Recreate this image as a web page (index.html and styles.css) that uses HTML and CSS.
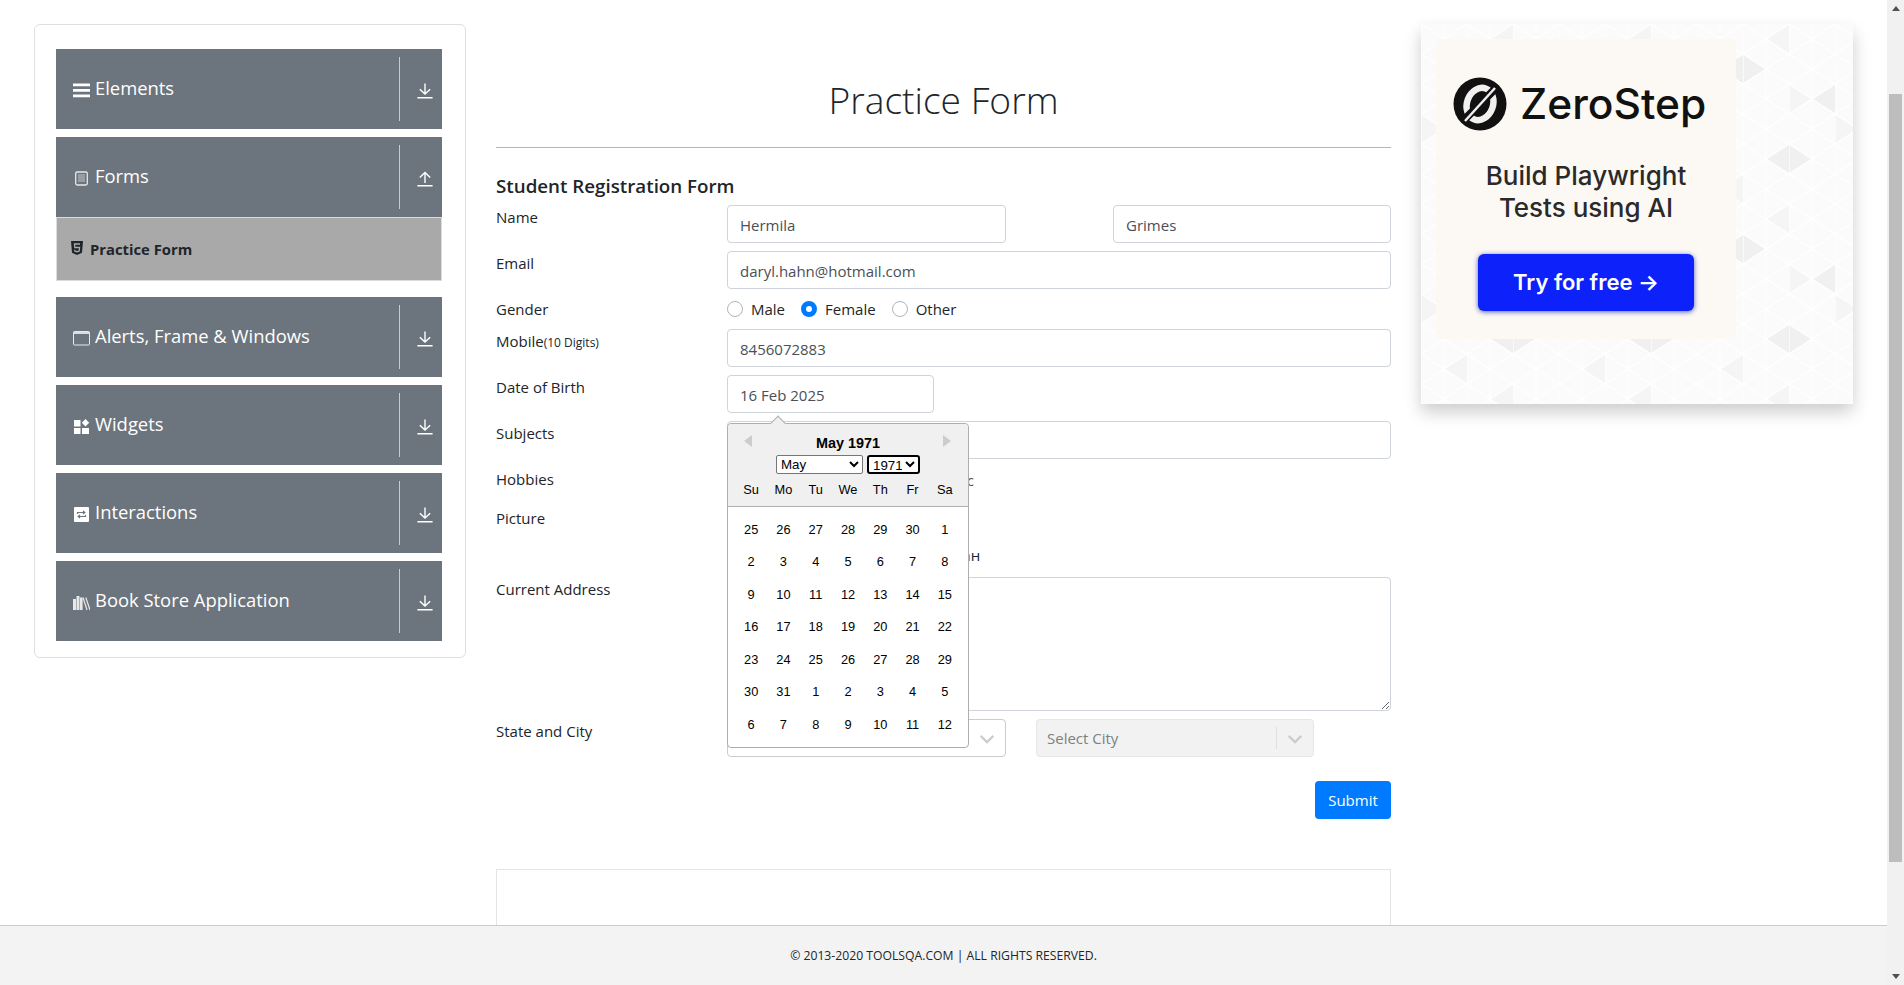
FILE: index.html
```html
<!DOCTYPE html>
<html lang="en">
<head>
    <meta charset="UTF-8">
    <meta name="viewport" content="width=device-width, initial-scale=1.0">
    <title>Practice Form</title>
    <link rel="stylesheet" href="styles.css">
</head>
<body>
<div class="page">
    <div class="content">
        <aside class="left-panel">
            <div class="menu-card">
                <div class="group">
                    <div class="group-header">
                        <svg class="group-icon" viewBox="0 0 17 17"><path fill="#fff" d="M0 1.500h17v2.800H0zM0 7h17v2.800H0zM0 12.500h17v2.800H0z"/></svg>
                        <span class="group-title">Elements</span>
                        <span class="group-arrow"><svg viewBox="0 0 16 16"><path fill="none" stroke="#fff" stroke-width="1.400" d="M8 .5V11M2.800 6.200 8 11l5.200-4.800M.4 14.800h15.200"/></svg></span>
                    </div>
                </div>
                <div class="group">
                    <div class="group-header">
                        <svg class="group-icon" viewBox="0 0 17 17"><rect x="2.700" y="2" width="11.600" height="13" rx="1.500" fill="none" stroke="#e8e8e8" stroke-width="1.300"/><path stroke="#c4c7ca" stroke-width="1" d="M5 5h7M5 7h7M5 9h7M5 11h7"/></svg>
                        <span class="group-title">Forms</span>
                        <span class="group-arrow"><svg viewBox="0 0 16 16"><path fill="none" stroke="#fff" stroke-width="1.400" d="M8 12V1.500M2.800 6.500 8 1.500l5.200 5M.4 14.800h15.200"/></svg></span>
                    </div>
                    <div class="sub-item">
                        <svg class="sub-icon" viewBox="0 0 12 14"><path fill="#212529" d="M0 0h12l-1 11.800L6 14l-5-2.200z"/><path fill="none" stroke="#a9a9a9" stroke-width="1.300" d="M9 3H3.500l.3 3.500h4.700l-.3 3.500-2.200.7-2.200-.7-.1-1.200"/></svg>
                        <span>Practice Form</span>
                    </div>
                </div>
                <div class="group">
                    <div class="group-header">
                        <svg class="group-icon" viewBox="0 0 17 17"><rect x=".5" y="1.500" width="16" height="13.500" rx=".8" fill="none" stroke="#e8e8e8"/><path stroke="#e8e8e8" stroke-width="1.800" d="M.5 3h16"/></svg>
                        <span class="group-title">Alerts, Frame &amp; Windows</span>
                        <span class="group-arrow"><svg viewBox="0 0 16 16"><path fill="none" stroke="#fff" stroke-width="1.400" d="M8 .5V11M2.800 6.200 8 11l5.200-4.800M.4 14.800h15.200"/></svg></span>
                    </div>
                </div>
                <div class="group">
                    <div class="group-header">
                        <svg class="group-icon" viewBox="0 0 17 17"><path fill="#fff" d="M1 2h6.500v6.500H1zM1 10h6.500v6H1zM9 10h7v6H9zM12.500 1l3.700 3.700-3.700 3.700-3.700-3.700z"/></svg>
                        <span class="group-title">Widgets</span>
                        <span class="group-arrow"><svg viewBox="0 0 16 16"><path fill="none" stroke="#fff" stroke-width="1.400" d="M8 .5V11M2.800 6.200 8 11l5.200-4.800M.4 14.800h15.200"/></svg></span>
                    </div>
                </div>
                <div class="group">
                    <div class="group-header">
                        <svg class="group-icon" viewBox="0 0 17 17"><rect x="1" y="1" width="15" height="15" rx="1" fill="#fff"/><path fill="none" stroke="#6c757d" stroke-width="1.200" d="M4.500 8V6.500h7M10 5l1.800 1.500L10 8M12.500 9v1.500h-7M7 9l-1.800 1.500L7 12"/></svg>
                        <span class="group-title">Interactions</span>
                        <span class="group-arrow"><svg viewBox="0 0 16 16"><path fill="none" stroke="#fff" stroke-width="1.400" d="M8 .5V11M2.800 6.200 8 11l5.200-4.800M.4 14.800h15.200"/></svg></span>
                    </div>
                </div>
                <div class="group">
                    <div class="group-header">
                        <svg class="group-icon" viewBox="0 0 17 17"><path fill="#e8e8e8" d="M0 5h3v11H0zM3.500 2h3v14h-3zM7 3.500h2.600V16H7z"/><path stroke="#e8e8e8" stroke-width="1.200" fill="none" d="M10 3.500 14 16M12.800 3.500 17 16"/></svg>
                        <span class="group-title">Book Store Application</span>
                        <span class="group-arrow"><svg viewBox="0 0 16 16"><path fill="none" stroke="#fff" stroke-width="1.400" d="M8 .5V11M2.800 6.200 8 11l5.200-4.800M.4 14.800h15.200"/></svg></span>
                    </div>
                </div>
            </div>
        </aside>

        <main class="form-col">
            <h1 class="page-title">Practice Form</h1>
            <hr class="title-rule">
            <h5 class="form-title">Student Registration Form</h5>
            <form class="reg-form">
                <div class="row">
                    <label class="row-label">Name</label>
                    <div class="row-body name-fields">
                        <input class="field" type="text" value="Hermila">
                        <input class="field" type="text" value="Grimes">
                    </div>
                </div>
                <div class="row">
                    <label class="row-label">Email</label>
                    <div class="row-body"><input class="field" type="text" value="daryl.hahn@hotmail.com"></div>
                </div>
                <div class="row row-short">
                    <label class="row-label">Gender</label>
                    <div class="row-body radios">
                        <span class="radio"><i class="dot"></i>Male</span>
                        <span class="radio"><i class="dot dot-on"></i>Female</span>
                        <span class="radio"><i class="dot"></i>Other</span>
                    </div>
                </div>
                <div class="row">
                    <label class="row-label">Mobile<small>(10 Digits)</small></label>
                    <div class="row-body"><input class="field" type="text" value="8456072883"></div>
                </div>
                <div class="row">
                    <label class="row-label">Date of Birth</label>
                    <div class="row-body dob-body">
                        <input class="field dob-field" type="text" value="16 Feb 2025">
                        <div class="datepicker">
                            <div class="dp-head">
                                <span class="dp-prev"></span>
                                <span class="dp-next"></span>
                                <div class="dp-month">May 1971</div>
                                <div class="dp-selects">
                                    <select class="dp-select dp-select-month"><option>May</option></select>
                                    <select class="dp-select dp-select-year"><option>1971</option></select>
                                </div>
                                <div class="dp-names">
                                    <span>Su</span><span>Mo</span><span>Tu</span><span>We</span><span>Th</span><span>Fr</span><span>Sa</span>
                                </div>
                            </div>
                            <div class="dp-days">
                                <span>25</span><span>26</span><span>27</span><span>28</span><span>29</span><span>30</span><span>1</span>
                                <span>2</span><span>3</span><span>4</span><span>5</span><span>6</span><span>7</span><span>8</span>
                                <span>9</span><span>10</span><span>11</span><span>12</span><span>13</span><span>14</span><span>15</span>
                                <span>16</span><span>17</span><span>18</span><span>19</span><span>20</span><span>21</span><span>22</span>
                                <span>23</span><span>24</span><span>25</span><span>26</span><span>27</span><span>28</span><span>29</span>
                                <span>30</span><span>31</span><span>1</span><span>2</span><span>3</span><span>4</span><span>5</span>
                                <span>6</span><span>7</span><span>8</span><span>9</span><span>10</span><span>11</span><span>12</span>
                            </div>
                        </div>
                    </div>
                </div>
                <div class="row">
                    <label class="row-label">Subjects</label>
                    <div class="row-body"><div class="field"></div></div>
                </div>
                <div class="row row-hobbies">
                    <label class="row-label">Hobbies</label>
                    <div class="row-body hobby-text">Music</div>
                </div>
                <div class="row row-picture">
                    <label class="row-label">Picture</label>
                    <div class="row-body file-text">Файл не выбран</div>
                </div>
                <div class="row row-address">
                    <label class="row-label">Current Address</label>
                    <div class="row-body"><textarea class="field address"></textarea></div>
                </div>
                <div class="row">
                    <label class="row-label">State and City</label>
                    <div class="row-body state-fields">
                        <div class="select-box">
                            <span class="select-text"></span>
                            <svg class="chev" viewBox="0 0 20 20"><path fill="#ccc" d="M4.500 7.100 10 12.600l5.500-5.500 1.600 1.600L10 15.800 2.900 8.700z"/></svg>
                        </div>
                        <div class="select-box select-off">
                            <span class="select-text">Select City</span>
                            <svg class="chev" viewBox="0 0 20 20"><path fill="#ccc" d="M4.500 7.100 10 12.600l5.500-5.500 1.600 1.600L10 15.800 2.900 8.700z"/></svg>
                        </div>
                    </div>
                </div>
                <div class="submit-row"><button class="submit" type="button">Submit</button></div>
            </form>
            <div class="empty-box"></div>
        </main>

        <aside class="ad-col">
            <div class="ad">
                <svg class="ad-pattern" width="100%" height="100%">
                    <defs>
                        <pattern id="shades" width="138" height="180" patternUnits="userSpaceOnUse">
                            <path fill="#f0f0f0" d="M23 45 46 30v30zM46 30v30l23-15zM69 135l23-15v30zM92 120v30l23-15zM115 75l23-15v30z"/>
                            <path fill="#f5f5f5" d="M0 90l23 15-23 15zM69 15 92 0v30zM23 165l23-15v30zM92 60l23 15-23 15z"/>
                        </pattern>
                        <pattern id="lines" width="46" height="30" patternUnits="userSpaceOnUse">
                            <path fill="none" stroke="#fff" stroke-width="1.200" d="M0 0v30M23 0v30M0 0l46 30M46 0 0 30M0 30 23 15M23 15 46 0"/>
                        </pattern>
                    </defs>
                    <rect width="100%" height="100%" fill="url(#shades)"/>
                    <rect width="100%" height="100%" fill="url(#lines)"/>
                </svg>
                <div class="ad-inner">
                    <div class="ad-logo">
                        <svg class="ad-mark" viewBox="0 0 54 54">
                            <circle cx="27" cy="27" r="26.500" fill="#111"/>
                            <ellipse cx="27" cy="27" rx="13" ry="16.500" fill="none" stroke="#f2f0ee" stroke-width="6.500" transform="rotate(20 27 27)"/>
                            <path stroke="#111" stroke-width="8" d="M12 42 42 12"/>
                            <path stroke="#f2f0ee" stroke-width="2.500" d="M12 44 42 11"/>
                        </svg>
                        <span class="ad-name">ZeroStep</span>
                    </div>
                    <div class="ad-text">Build Playwright<br>Tests using AI</div>
                    <div class="ad-btn">Try for free →</div>
                </div>
            </div>
        </aside>
    </div>
    <footer class="footer">© 2013-2020 TOOLSQA.COM | ALL RIGHTS RESERVED.</footer>
</div>
<div class="scrollbar">
    <span class="sb-up"></span>
    <div class="sb-track"><div class="sb-thumb"></div></div>
    <span class="sb-down"></span>
</div>
</body>
</html>
```
FILE: styles.css
```css
* {
    box-sizing: border-box;
}
html, body {
    height: 100%;
}
body {
    margin: 0;
    display: flex;
    overflow: hidden;
    background: #fff;
    color: #212529;
    font-family: "Open Sans", "Noto Sans", Arial, sans-serif;
    font-size: 15px;
}
.page {
    flex: 1;
    min-width: 0;
    display: flex;
    flex-direction: column;
}
.content {
    flex: 1;
    min-height: 0;
    overflow: hidden;
    display: flex;
    padding-left: 34px;
}

/* left menu */
.left-panel {
    width: 432px;
    flex-shrink: 0;
    padding-top: 24px;
}
.menu-card {
    border: 1px solid #dfdfdf;
    border-radius: 6px;
    padding: 24px 23px 8px 21px;
}
.group {
    margin-bottom: 8px;
}
.group:nth-child(2) {
    margin-bottom: 16px;
}
.group-header {
    height: 80px;
    padding: 8px 0;
    background: #6c757d;
    color: #fff;
    display: flex;
    align-items: center;
}
.group-icon {
    width: 17px;
    height: 17px;
    margin: 3px 5px 0 17px;
    flex-shrink: 0;
}
.group-title {
    flex: 1;
    font-size: 18.400px;
    margin-top: -4px;
}
.group-arrow {
    width: 43px;
    height: 64px;
    border-left: 1px solid #c8cbce;
    display: flex;
    align-items: center;
    padding-left: 17px;
}
.group-arrow svg {
    width: 16px;
    height: 16px;
    margin-top: 4px;
}
.sub-item {
    height: 64px;
    background: #a9a9a9;
    border: 1px solid #dcdcdc;
    display: flex;
    align-items: center;
    padding-left: 14px;
    font-size: 14.800px;
    font-weight: 700;
}
.sub-icon {
    width: 12px;
    height: 14px;
    margin: -2px 7px 0 0;
}

/* form */
.form-col {
    width: 895px;
    margin-left: 30px;
    flex-shrink: 0;
}
.page-title {
    margin: 0;
    padding-top: 74px;
    height: 147px;
    line-height: 52px;
    font-size: 37.200px;
    font-weight: 300;
    text-align: center;
}
.title-rule {
    margin: 0;
    border: 0;
    border-top: 1px solid #b5b5b5;
}
.form-title {
    margin: 23px 0 0;
    height: 34px;
    line-height: 30px;
    font-size: 18.750px;
    font-weight: 600;
}
.row {
    display: flex;
    height: 38px;
    margin-bottom: 8px;
}
.row-short {
    height: 24px;
}
.row-label {
    width: 231px;
    flex-shrink: 0;
    line-height: 24px;
}
.row-label small {
    font-size: 12px;
}
.row-body {
    flex: 1;
    min-width: 0;
    position: relative;
}
.field {
    display: block;
    width: 100%;
    height: 38px;
    padding: 7px 12px 5px;
    border: 1px solid #ced4da;
    border-radius: 4px;
    background: #fff;
    color: #495057;
    font: inherit;
    outline: 0;
}
.name-fields {
    display: flex;
    justify-content: space-between;
}
.name-fields .field {
    width: 279px;
}
.name-fields .field:last-child {
    width: 278px;
}
.radios {
    display: flex;
    gap: 16px;
    align-items: center;
    height: 24px;
}
.radio {
    display: flex;
    align-items: center;
    gap: 8px;
}
.dot {
    width: 16px;
    height: 16px;
    border: 1px solid #adb5bd;
    border-radius: 50%;
}
.dot-on {
    border: 5px solid #007bff;
    background: #fff;
}
.dob-field {
    width: 207px;
}
.row-hobbies {
    height: 24px;
    margin-bottom: 15px;
}
.row-picture {
    height: 62px;
    margin-bottom: 9px;
}
.hobby-text {
    padding: 1px 0 0 206px;
    color: #495057;
    line-height: 24px;
}
.file-text {
    padding: 40px 0 0 133px;
    line-height: 18px;
}
.row-address {
    height: 134px;
}
.address {
    height: 134px;
    resize: vertical;
}
.state-fields {
    display: flex;
    gap: 30px;
}
.select-box {
    width: 279px;
    height: 38px;
    border: 1px solid #ccc;
    border-radius: 4px;
    display: flex;
    align-items: center;
    padding-left: 10px;
}
.select-off {
    background: #f2f2f2;
    border-color: #e6e6e6;
    width: 278px;
    color: #808080;
}
.select-text {
    flex: 1;
    height: 22px;
    line-height: 22px;
}
.select-off .select-text {
    border-right: 1px solid #e0e0e0;
    margin-right: 8px;
}
.chev {
    width: 20px;
    height: 20px;
    margin-right: 8px;
}
.submit-row {
    display: flex;
    justify-content: flex-end;
    padding-top: 16px;
}
.submit {
    height: 38px;
    width: 76px;
    padding: 0;
    border: 0;
    border-radius: 4px;
    background: #007bff;
    color: #fff;
    font: inherit;
}
.empty-box {
    height: 100px;
    margin-top: 50px;
    border: 1px solid #e5e5e5;
}

/* date picker */
.datepicker {
    position: absolute;
    left: 0;
    top: 48px;
    width: 242px;
    z-index: 5;
    background: #fff;
    border: 1px solid #aeaeae;
    border-radius: 4px;
    color: #000;
    font-family: "Liberation Sans", Arial, sans-serif;
    font-size: 12.800px;
}
.datepicker::before {
    content: "";
    position: absolute;
    top: -6px;
    left: 44px;
    width: 11px;
    height: 11px;
    background: #f0f0f0;
    border: 1px solid #aeaeae;
    border-right: 0;
    border-bottom: 0;
    transform: rotate(45deg);
}
.dp-head {
    position: relative;
    height: 83px;
    background: #f0f0f0;
    border-bottom: 1px solid #aeaeae;
    border-radius: 4px 4px 0 0;
    padding-top: 11px;
    text-align: center;
}
.dp-prev, .dp-next {
    position: absolute;
    top: 11px;
    width: 0;
    height: 0;
    border-top: 6.500px solid transparent;
    border-bottom: 6.500px solid transparent;
}
.dp-prev {
    left: 16px;
    border-right: 8px solid #ccc;
}
.dp-next {
    right: 17px;
    border-left: 8px solid #ccc;
}
.dp-month {
    font-size: 14.400px;
    font-weight: 700;
    line-height: 17px;
}
.dp-selects {
    display: flex;
    justify-content: center;
    gap: 4px;
    height: 19px;
    margin-top: 3px;
}
.dp-select {
    height: 19px;
    padding: 0;
    background: #fff;
    border: 1px solid #767676;
    border-radius: 2px;
    color: #000;
    font-family: inherit;
    font-size: 13.333px;
}
.dp-select-month {
    width: 87px;
}
.dp-select-year {
    width: 53px;
    border: 2px solid #000;
    border-radius: 3px;
}
.dp-names, .dp-days {
    display: grid;
    grid-template-columns: repeat(7, 1fr);
    padding: 0 7px;
    text-align: center;
}
.dp-names {
    margin-top: 7px;
    line-height: 18px;
}
.dp-days {
    padding-top: 6.500px;
    padding-bottom: 6px;
    grid-auto-rows: 32.500px;
    line-height: 32.500px;
}

/* ad */
.ad-col {
    padding: 24px 0 0 30px;
}
.ad {
    position: relative;
    width: 432px;
    height: 380px;
    padding: 15px;
    background: #fbfbfb;
    box-shadow: 0 8px 16px rgba(0, 0, 0, .2);
}
.ad-pattern {
    position: absolute;
    left: 0;
    top: 0;
}
.ad-inner {
    position: relative;
    width: 300px;
    height: 300px;
    background: #fcf8f4;
    padding-top: 38px;
    text-align: center;
    font-family: Inter, "Noto Sans", sans-serif;
    color: #2a2a2a;
}
.ad-logo {
    display: flex;
    align-items: center;
    padding-left: 17px;
}
.ad-mark {
    width: 54px;
    height: 54px;
}
.ad-name {
    margin-left: 13px;
    font-size: 42.500px;
    font-weight: 500;
    line-height: 54px;
    color: #111;
}
.ad-text {
    margin-top: 29px;
    font-size: 26px;
    font-weight: 500;
    line-height: 32px;
}
.ad-btn {
    width: 216px;
    height: 57px;
    margin: 30px auto 0;
    border-radius: 6px;
    background: #0d21fb;
    box-shadow: 0 1px 5px rgba(13, 33, 160, .7);
    color: #fff;
    font-size: 22px;
    font-weight: 600;
    line-height: 56px;
}

/* footer and page scrollbar */
.footer {
    height: 60px;
    flex-shrink: 0;
    background: #f3f3f3;
    border-top: 1px solid #ccc;
    text-align: center;
    font-size: 12.200px;
    line-height: 60px;
    color: #212529;
}
.scrollbar {
    width: 17px;
    flex-shrink: 0;
    background: #f1f1f1;
    display: flex;
    flex-direction: column;
    align-items: center;
}
.sb-up, .sb-down {
    flex-shrink: 0;
    margin: 6px 0;
    width: 0;
    height: 0;
    border-left: 4px solid transparent;
    border-right: 4px solid transparent;
}
.sb-up {
    border-bottom: 5px solid #505050;
}
.sb-down {
    border-top: 5px solid #505050;
}
.sb-track {
    flex: 1;
    width: 13px;
    padding-top: 77px;
    padding-bottom: 106px;
}
.sb-thumb {
    height: 100%;
    background: #bdbdbd;
}
```
